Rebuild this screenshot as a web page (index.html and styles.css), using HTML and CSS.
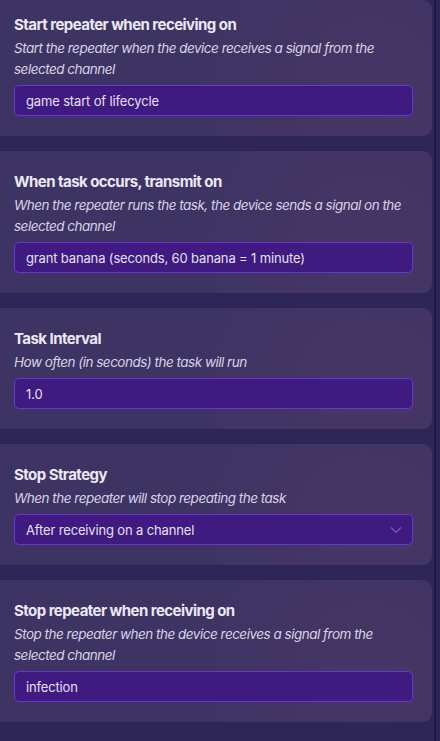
FILE: index.html
```html
<!DOCTYPE html>
<html>
<head>
<meta charset="utf-8">
<link rel="stylesheet" href="styles.css">
</head>
<body>
<div class="page">
  <div class="list">
    <section class="card first">
      <h2 class="title">Start repeater when receiving on</h2>
      <p class="desc">Start the repeater when the device receives a signal from the selected channel</p>
      <div class="field">game start of lifecycle</div>
    </section>
    <section class="card">
      <h2 class="title">When task occurs, transmit on</h2>
      <p class="desc">When the repeater runs the task, the device sends a signal on the selected channel</p>
      <div class="field">grant banana (seconds, 60 banana = 1 minute)</div>
    </section>
    <section class="card">
      <h2 class="title">Task Interval</h2>
      <p class="desc">How often (in seconds) the task will run</p>
      <div class="field">1.0</div>
    </section>
    <section class="card">
      <h2 class="title">Stop Strategy</h2>
      <p class="desc">When the repeater will stop repeating the task</p>
      <div class="field select">
        <span>After receiving on a channel</span>
        <svg class="chev" width="12" height="8" viewBox="0 0 12 8"><path d="M1 1.5 L6 6.5 L11 1.5" fill="none" stroke="currentColor" stroke-width="1.2"/></svg>
      </div>
    </section>
    <section class="card">
      <h2 class="title">Stop repeater when receiving on</h2>
      <p class="desc">Stop the repeater when the device receives a signal from the selected channel</p>
      <div class="field">infection</div>
    </section>
  </div>
  <div class="scrollbar"></div>
</div>
</body>
</html>
```

FILE: styles.css
```css
html, body {
  margin: 0;
  padding: 0;
  background: #2e2656;
  height: 100%;
  overflow: hidden;
}
.page {
  display: flex;
  height: 741px;
  font-family: Inter, "Noto Sans", sans-serif;
}
.list {
  width: 432px;
  display: flex;
  flex-direction: column;
  gap: 15px;
}
.card {
  background: #3e3464;
  background-image: radial-gradient(circle at 85% 70%, rgba(80, 55, 100, 0.45), rgba(62, 52, 100, 0) 45%);
  border-radius: 0 9px 9px 0;
  padding: 21px 19px 20px 14px;
  box-sizing: border-box;
}
.card.first {
  padding-top: 15px;
}
.title {
  margin: 0;
  font-size: 15px;
  font-weight: 700;
  line-height: 20px;
  color: #ece8f4;
  letter-spacing: -0.55px;
}
.desc {
  margin: 3px 0 0;
  font-size: 13.5px;
  font-style: italic;
  line-height: 21px;
  color: #d8d2e6;
  letter-spacing: -0.5px;
}
.field {
  margin-top: 5px;
  height: 31px;
  box-sizing: border-box;
  border: 1px solid #6a35d4;
  border-radius: 5px;
  background: #3f1a80;
  padding: 0 11px;
  display: flex;
  align-items: center;
  font-size: 13px;
  letter-spacing: -0.15px;
  color: #e6e0f2;
}
.select {
  justify-content: space-between;
}
.chev {
  color: #7a5cbf;
  margin-right: -1px;
}
.scrollbar {
  width: 2px;
  margin-left: 2px;
  background: #201a42;
  height: 100%;
}
```
